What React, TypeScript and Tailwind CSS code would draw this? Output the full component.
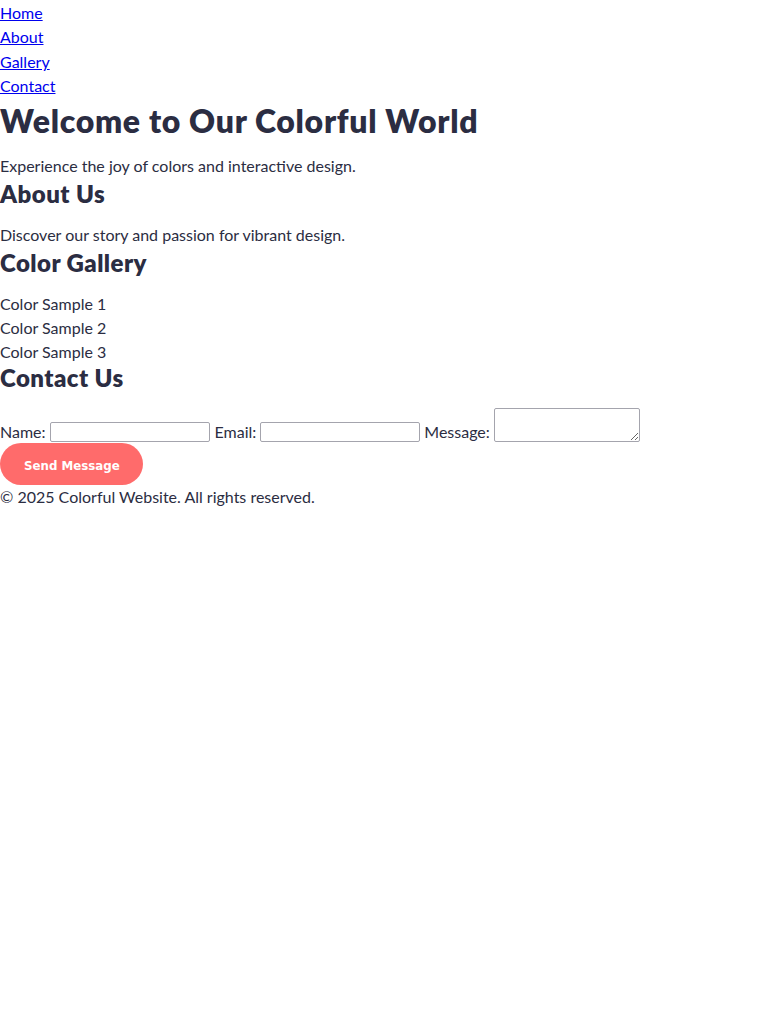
import React from "react";

export default function App() {
  const font = { fontFamily: "Lato, 'Noto Sans', sans-serif" };
  return (
    <div className="min-h-[1024px] bg-white text-[#2b2d42] text-base" style={font}>
      <nav>
        <ul className="list-none m-0 p-0 pt-px">
          {["Home", "About", "Gallery", "Contact"].map((l) => (
            <li key={l} className="leading-[24.25px]">
              <a href={"#" + l.toLowerCase()} className="text-[#0000ee] underline">
                {l}
              </a>
            </li>
          ))}
        </ul>
      </nav>
      <section>
        <h1 className="text-[32px] leading-[46px] pb-[2px] font-extrabold tracking-[0.7px] mb-2">Welcome to Our Colorful World</h1>
        <p className="leading-6">Experience the joy of colors and interactive design.</p>
      </section>
      <section>
        <h2 className="text-2xl leading-8 pb-1 font-extrabold tracking-[0.45px] mb-2">About Us</h2>
        <p className="leading-6 pt-px">Discover our story and passion for vibrant design.</p>
      </section>
      <section>
        <h2 className="text-2xl leading-8 pb-[3px] font-extrabold tracking-[0.45px] mb-[10px]">Color Gallery</h2>
        <div className="leading-6">Color Sample 1</div>
        <div className="leading-6">Color Sample 2</div>
        <div className="leading-6">Color Sample 3</div>
      </section>
      <section>
        <h2 className="text-2xl leading-[28px] pb-[6px] font-extrabold tracking-[0.45px] mb-2">Contact Us</h2>
        <form onSubmit={(e) => e.preventDefault()}>
          <div className="flex items-end gap-1 pt-[2px] pb-px">
            <label className="leading-5">Name:</label>
            <input type="text" className="w-[160px] h-[20px] border border-[#a4a4ad] rounded-[2px] bg-white" />
            <label className="leading-5 ml-px">Email:</label>
            <input type="email" className="w-[160px] h-[20px] border border-[#a4a4ad] rounded-[2px] bg-white" />
            <label className="leading-5">Message:</label>
            <textarea className="w-[146px] h-[34px] border border-[#a4a4ad] rounded-[2px] bg-white resize" />
          </div>
          <button
            type="submit"
            className="block h-[42px] pl-6 pr-[23px] pt-[6px] rounded-full bg-[#ff6b6b] text-white font-bold text-[11.8px]"
            style={{ fontFamily: "'DejaVu Sans', Verdana, sans-serif" }}
          >
            Send Message
          </button>
        </form>
      </section>
      <footer className="leading-6">© 2025 Colorful Website. All rights reserved.</footer>
    </div>
  );
}
